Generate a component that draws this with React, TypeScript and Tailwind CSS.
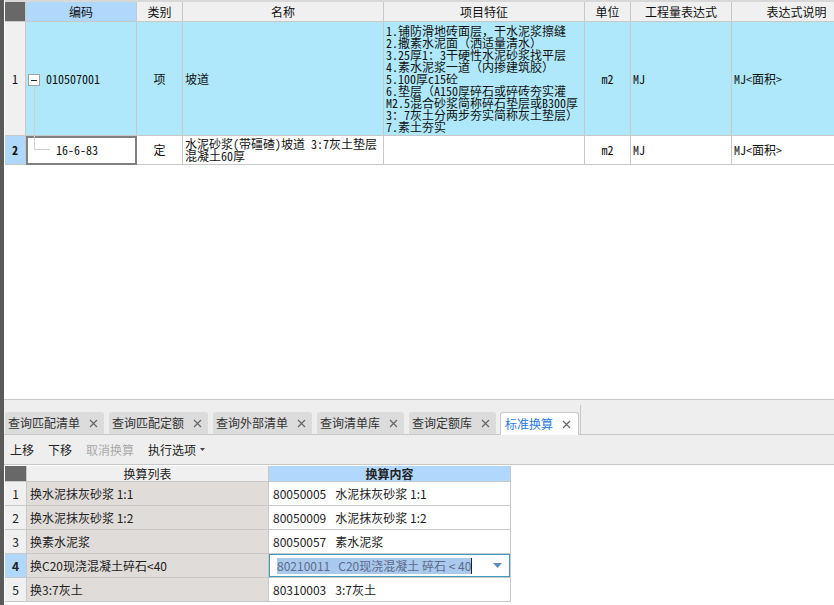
import React from 'react';

const FONT = { fontFamily: '"Noto Sans CJK SC", "Noto Sans", sans-serif' };
const GRID_FONT = { fontFamily: '"Noto Sans Mono CJK SC", "Noto Sans CJK SC", monospace' };

const topCols = 'grid grid-cols-[21px_111px_46px_201px_201px_46px_101px_130px]';
const lowCols = 'grid grid-cols-[22px_242px_242px]';

const features = [
  '1.铺防滑地砖面层，干水泥浆擦缝',
  '2.撒素水泥面（洒适量清水）',
  '3.25厚1：3干硬性水泥砂浆找平层',
  '4.素水泥浆一道（内掺建筑胶）',
  '5.100厚c15砼',
  '6.垫层（A150厚碎石或碎砖夯实灌',
  'M2.5混合砂浆简称碎石垫层或B300厚',
  '3：7灰土分两步夯实简称灰土垫层）',
  '7.素土夯实',
];

const tabs = ['查询匹配清单', '查询匹配定额', '查询外部清单', '查询清单库', '查询定额库'];

const rows = [
  { list: '换水泥抹灰砂浆 1:1', code: '80050005', name: '水泥抹灰砂浆 1:1' },
  { list: '换水泥抹灰砂浆 1:2', code: '80050009', name: '水泥抹灰砂浆 1:2' },
  { list: '换素水泥浆', code: '80050057', name: '素水泥浆' },
  { list: '换C20现浇混凝土碎石<40', code: '80210011', name: 'C20现浇混凝土 碎石 < 40', editing: true },
  { list: '换3:7灰土', code: '80310003', name: '3:7灰土' },
];

const cell = 'border-r border-b border-[#c8c8c8]';

function CloseX() {
  return (
    <svg width="9" height="9" viewBox="0 0 9 9" className="shrink-0">
      <path d="M1 1L8 8M8 1L1 8" stroke="#666" strokeWidth="1.2" />
    </svg>
  );
}

export default function App() {
  return (
    <div className="w-[834px] h-[605px] overflow-hidden bg-white flex text-[#111]" style={FONT}>
      <div className="w-[4px] h-full bg-[#5a5a5a] shrink-0" />
      <div className="flex-1 flex flex-col min-w-0">
        {/* top grid */}
        <div className="h-[399px] pl-px overflow-hidden" style={GRID_FONT}>
          <div className="h-[2px] bg-[#d8d8d8]" />
          <div className={`${topCols} h-[20px] text-[12px] leading-[12px]`}>
            <div className={`${cell} bg-[#686868]`} />
            <div className={`${cell} bg-[#b0d8fc] flex items-center justify-center`}>编码</div>
            <div className={`${cell} bg-[#f0f0f0] flex items-center justify-center`}>类别</div>
            <div className={`${cell} bg-[#f0f0f0] flex items-center justify-center`}>名称</div>
            <div className={`${cell} bg-[#f0f0f0] flex items-center justify-center`}>项目特征</div>
            <div className={`${cell} bg-[#f0f0f0] flex items-center justify-center`}>单位</div>
            <div className={`${cell} bg-[#f0f0f0] flex items-center justify-center`}>工程量表达式</div>
            <div className={`${cell} bg-[#f0f0f0] flex items-center justify-center`}>表达式说明</div>
          </div>
          <div className={`${topCols} h-[114px] text-[12px] leading-[12px]`}>
            <div className={`${cell} bg-[#f0f0f0] flex items-center justify-center`}>1</div>
            <div className={`${cell} bg-[#aee8fa] relative flex items-center pl-[20px]`}>
              <div className="absolute left-[2px] top-[52px] w-[12px] h-[12px] border border-[#a0a0a0] bg-white flex items-center justify-center">
                <div className="w-[6px] h-px bg-[#222]" />
              </div>
              <div className="absolute left-[8px] top-[64px] bottom-0 w-px bg-[#d0d0d0]" />
              010507001
            </div>
            <div className={`${cell} bg-[#aee8fa] flex items-center justify-center`}>项</div>
            <div className={`${cell} bg-[#aee8fa] flex items-center pl-[2px]`}>坡道</div>
            <div className={`${cell} bg-[#aee8fa] flex flex-col justify-center pl-[2px] whitespace-nowrap overflow-hidden`}>
              {features.map((f) => (
                <div key={f}>{f}</div>
              ))}
            </div>
            <div className={`${cell} bg-[#aee8fa] flex items-center justify-center`}>m2</div>
            <div className={`${cell} bg-[#aee8fa] flex items-center pl-[2px]`}>MJ</div>
            <div className={`${cell} bg-[#aee8fa] flex items-center pl-[2px]`}>MJ&lt;面积&gt;</div>
          </div>
          <div className={`${topCols} h-[29px] text-[12px] leading-[12px]`}>
            <div className={`${cell} bg-[#b0d8fc] flex items-center justify-center font-bold`}>2</div>
            <div className={`${cell} bg-white relative flex items-center pl-[30px] outline-2 outline-[#808080] -outline-offset-2`}>
              <div className="absolute left-[8px] top-0 h-[14px] w-px bg-[#d0d0d0]" />
              <div className="absolute left-[8px] top-[13px] w-[16px] h-px bg-[#d0d0d0]" />
              16-6-83
            </div>
            <div className={`${cell} flex items-center justify-center`}>定</div>
            <div className={`${cell} flex flex-col justify-center pl-[2px] whitespace-nowrap overflow-hidden`}>
              <div>水泥砂浆(带礓碴)坡道 3:7灰土垫层</div>
              <div>混凝土60厚</div>
            </div>
            <div className={cell} />
            <div className={`${cell} flex items-center justify-center`}>m2</div>
            <div className={`${cell} flex items-center pl-[2px]`}>MJ</div>
            <div className={`${cell} flex items-center pl-[2px]`}>MJ&lt;面积&gt;</div>
          </div>
        </div>

        {/* tab strip */}
        <div className="h-[36px] border-t border-b border-[#c8c8c8] bg-[#eeeeee] flex items-end pl-px gap-[5px] text-[12px] text-[#333]">
          {tabs.map((t) => (
            <div key={t} className="h-[22px] bg-[#dcdcdc] rounded-t-[3px] flex items-center pl-[3px] pr-[6px] gap-[9px]">
              <span>{t}</span>
              <CloseX />
            </div>
          ))}
          <div className="h-[23px] -mb-px -ml-px bg-white border border-b-0 border-[#c8c8c8] rounded-t-[3px] flex items-center pl-[4px] pr-[7px] gap-[9px]">
            <span className="text-[#2a7ae2]">标准换算</span>
            <CloseX />
          </div>
          <div className="w-px h-[29px] bg-[#c8c8c8] -ml-[4px]" />
        </div>

        {/* toolbar */}
        <div className="h-[30px] border-b border-[#c8c8c8] bg-[#eeeeee] flex items-center pl-[6px] gap-[14px] text-[12px] text-[#222]">
          <span>上移</span>
          <span>下移</span>
          <span className="text-[#aaaaaa]">取消换算</span>
          <span className="flex items-center gap-[4px]">
            执行选项
            <svg width="5" height="3" viewBox="0 0 5 3">
              <path d="M0 0H5L2.5 3Z" fill="#444" />
            </svg>
          </span>
        </div>

        {/* lower grid */}
        <div className="pt-[1px] pl-px text-[12px] text-[#222]">
          <div className={`${lowCols} h-[16px] leading-[15px]`}>
            <div className={`${cell} bg-[#686868]`} />
            <div className={`${cell} bg-[#f0f0f0] text-center`}>换算列表</div>
            <div className={`${cell} bg-[#b0d8fc] text-center font-bold`}>换算内容</div>
          </div>
          {rows.map((r, i) => (
            <div key={r.code} className={`${lowCols} h-[24px]`}>
              <div className={`${cell} flex items-center justify-center ${r.editing ? 'bg-[#b0d8fc] font-bold' : 'bg-[#f0f0f0]'}`}>
                {i + 1}
              </div>
              <div className={`${cell} bg-[#e0dcda] flex items-center pl-[3px] whitespace-nowrap`}>{r.list}</div>
              {r.editing ? (
                <div className={`${cell} bg-white`}>
                  <div className="h-full border border-[#3c9cc0] flex items-center pl-[7px] pr-[7px]">
                    <span className="bg-[#a9c9ef] text-[#5d6b88] whitespace-pre leading-[16px]">
                      <span className="mr-[8px]">{r.code}</span>
                      {r.name}
                    </span>
                    <span className="w-px h-[16px] bg-[#222]" />
                    <svg width="9" height="5" viewBox="0 0 9 5" className="ml-auto">
                      <path d="M0 0H9L4.5 5Z" fill="#5b8fb9" />
                    </svg>
                  </div>
                </div>
              ) : (
                <div className={`${cell} bg-white flex items-center pl-[4px] whitespace-pre`}>
                  <span className="mr-[9px]">{r.code}</span>
                  {r.name}
                </div>
              )}
            </div>
          ))}
        </div>
      </div>
    </div>
  );
}
